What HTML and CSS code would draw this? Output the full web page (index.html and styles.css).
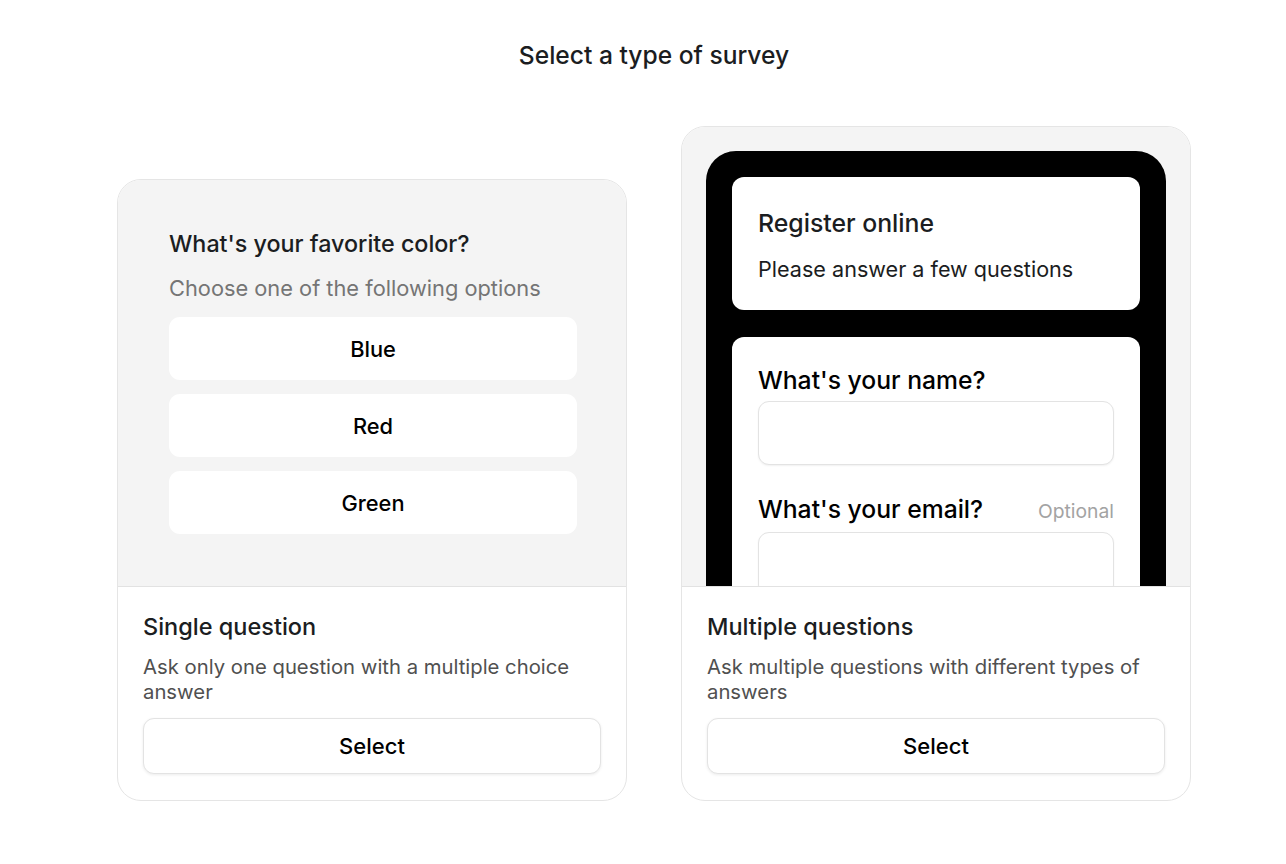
FILE: index.html
```html
<!DOCTYPE html>
<html lang="en">
<head>
<meta charset="utf-8">
<title>Select a type of survey</title>
<link rel="stylesheet" href="styles.css">
</head>
<body>
<main class="page">
  <h1 class="title">Select a type of survey</h1>
  <div class="cards">
    <section class="card">
      <div class="preview preview-single">
        <div class="q-title">What's your favorite color?</div>
        <div class="q-sub">Choose one of the following options</div>
        <div class="options">
          <div class="option">Blue</div>
          <div class="option">Red</div>
          <div class="option">Green</div>
        </div>
      </div>
      <div class="footer">
        <h2 class="f-title">Single question</h2>
        <p class="f-desc">Ask only one question with a multiple choice answer</p>
        <button class="select-btn">Select</button>
      </div>
    </section>
    <section class="card">
      <div class="preview preview-multi">
        <div class="phone">
          <div class="panel panel-head">
            <div class="reg-title">Register online</div>
            <div class="reg-sub">Please answer a few questions</div>
          </div>
          <div class="panel panel-form">
            <div class="field-label"><span>What's your name?</span></div>
            <div class="input"></div>
            <div class="field-label field-gap"><span>What's your email?</span><span class="optional">Optional</span></div>
            <div class="input"></div>
          </div>
        </div>
      </div>
      <div class="footer">
        <h2 class="f-title">Multiple questions</h2>
        <p class="f-desc">Ask multiple questions with different types of answers</p>
        <button class="select-btn">Select</button>
      </div>
    </section>
  </div>
</main>
</body>
</html>
```
FILE: styles.css
```css
* { box-sizing: border-box; }
html, body { margin: 0; padding: 0; background: #ffffff; }
body {
  font-family: Inter, "Noto Sans", "Liberation Sans", sans-serif;
  color: #1b1d21;
}
.page {
  width: 1074px;
  margin-left: 117px;
  padding-top: 39px;
}
.title {
  margin: 0 0 55px;
  text-align: center;
  font-size: 24.6px;
  line-height: 32px;
  font-weight: 500;
  color: #1b1d21;
}
.cards {
  display: flex;
  align-items: flex-end;
  gap: 54px;
}
.card {
  width: 510px;
  border: 1px solid #e5e5e5;
  border-radius: 24px;
  overflow: hidden;
  background: #fff;
}
.preview {
  background: #f4f4f4;
  border-bottom: 1px solid #e2e2e2;
  overflow: hidden;
}
.preview-single {
  height: 407px;
  padding: 49px 49px 0 51px;
}
.q-title {
  font-size: 23.3px;
  line-height: 30px;
  font-weight: 500;
  color: #1b1d21;
}
.q-sub {
  margin-top: 15px;
  font-size: 21.8px;
  line-height: 28px;
  color: #757575;
}
.options {
  margin-top: 15px;
  display: flex;
  flex-direction: column;
  gap: 14px;
}
.option {
  height: 63px;
  border-radius: 11px;
  background: #fff;
  display: flex;
  align-items: center;
  justify-content: center;
  font-size: 21.8px;
  font-weight: 500;
  color: #000;
}
.preview-multi {
  height: 460px;
  padding: 24px 24px 0;
}
.phone {
  width: 460px;
  height: 480px;
  background: #000;
  border-radius: 30px 30px 0 0;
  padding: 26px 26px 0;
}
.panel {
  background: #fff;
  border-radius: 12px;
  padding: 29px 26px 26px;
}
.panel-head { height: 133px; }
.panel-form {
  margin-top: 27px;
  padding-top: 27px;
}
.reg-title {
  font-size: 24.8px;
  line-height: 34px;
  font-weight: 500;
  color: #1b1d21;
}
.reg-sub {
  margin-top: 15px;
  font-size: 21.6px;
  line-height: 28px;
  color: #1b1d21;
}
.field-label {
  display: flex;
  justify-content: space-between;
  align-items: baseline;
  font-size: 24.7px;
  line-height: 32px;
  font-weight: 500;
  color: #000;
}
.field-gap { margin-top: 28px; }
.optional {
  font-size: 19.3px;
  font-weight: 400;
  color: #a3a3a3;
}
.input {
  margin-top: 5px;
  height: 64px;
  border: 1px solid #e3e3e3;
  border-radius: 11px;
  background: #fff;
  box-shadow: 0 1px 2px rgba(0, 0, 0, 0.06);
}
.footer {
  padding: 26px 25px 26px;
}
.f-title {
  margin: 0;
  font-size: 23.5px;
  line-height: 28px;
  font-weight: 500;
  color: #1b1d21;
}
.f-desc {
  margin: 13px 0 0;
  font-size: 20.3px;
  line-height: 25px;
  color: #505050;
}
.select-btn {
  display: block;
  width: 100%;
  height: 56px;
  margin-top: 14px;
  border: 1px solid #e3e3e3;
  border-radius: 11px;
  background: #fff;
  box-shadow: 0 1px 3px rgba(0, 0, 0, 0.08);
  font-family: inherit;
  font-size: 22px;
  font-weight: 500;
  color: #000;
}
```
